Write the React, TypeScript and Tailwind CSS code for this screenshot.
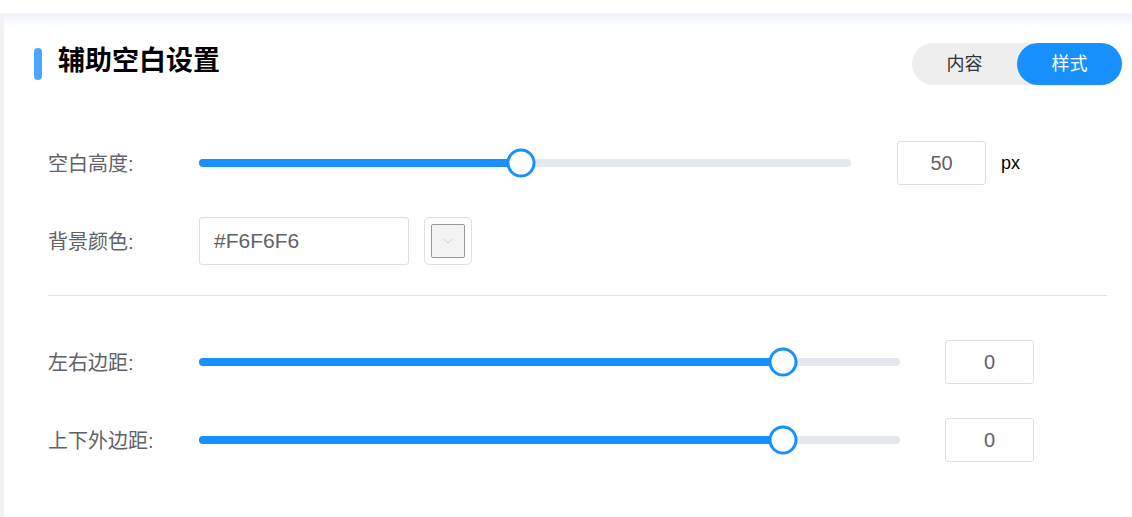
import React from "react";

const font = "font-['Liberation_Sans','Noto_Sans_CJK_SC',sans-serif]";

function Slider({ pct }: { pct: number }) {
  return (
    <div className="relative flex-1 h-[8px] rounded-full bg-[#e4e7ed]">
      <div className="absolute left-0 top-0 h-[8px] rounded-full bg-[#1890ff]" style={{ width: `${pct}%` }} />
      <div
        className="absolute top-1/2 w-[29px] h-[29px] -translate-x-1/2 -translate-y-1/2 rounded-full border-[3px] border-[#1890ff] bg-white"
        style={{ left: `${pct}%` }}
      />
    </div>
  );
}

function NumInput({ value }: { value: string }) {
  return (
    <div className="w-[89px] h-[44px] flex items-center justify-center border border-[#dcdfe6] rounded-[3px] text-[20px] text-[#606266]">
      {value}
    </div>
  );
}

function Label({ children }: { children: React.ReactNode }) {
  return <div className="w-[151px] pt-[2px] text-[20px] leading-none text-[#606266]">{children}</div>;
}

export default function App() {
  return (
    <div className={`w-[1132px] h-[517px] bg-white flex flex-col overflow-hidden ${font}`}>
      <div className="h-[13px] bg-white" />
      <div className="flex flex-1">
        <div className="w-[4px] bg-[#f2f2f2]" />
        <div className="relative flex-1 bg-white">
          <div className="absolute left-0 right-0 top-0 h-[14px] bg-gradient-to-b from-[#edf1fb] to-white" />
          <div className="relative">
            {/* header */}
            <div className="mt-[30px] h-[42px] flex items-center justify-between pl-[30px] pr-[10px]">
              <div className="flex items-center">
                <div className="w-[8px] h-[32px] rounded-full bg-[#4ca6ff]" />
                <div className="ml-[16px] mb-[6px] text-[27px] font-bold text-black leading-none">辅助空白设置</div>
              </div>
              <div className="flex w-[210px] h-[42px] rounded-full bg-[#eeeeee] text-[18px]">
                <div className="flex-1 flex items-center justify-center text-[#333]">内容</div>
                <div className="w-[105px] flex items-center justify-center rounded-full bg-[#1890ff] text-white">样式</div>
              </div>
            </div>

            <div className="pl-[44px] pr-[25px]">
              {/* row 1 */}
              <div className="mt-[56px] mr-[73px] h-[44px] flex items-center">
                <Label>空白高度:</Label>
                <Slider pct={49.4} />
                <div className="ml-[46px]"><NumInput value="50" /></div>
                <div className="w-[48px] pl-[15px] text-[18px] text-black">px</div>
              </div>
              {/* row 2 */}
              <div className="mt-[32px] h-[48px] flex items-center">
                <Label>背景颜色:</Label>
                <div className="w-[210px] h-[48px] flex items-center pl-[14px] border border-[#dcdfe6] rounded-[3px] text-[21px] text-[#606266]">
                  #F6F6F6
                </div>
                <div className="ml-[15px] w-[48px] h-[48px] flex items-center justify-center border border-[#dcdfe6] rounded-[5px]">
                  <div className="w-[34px] h-[34px] flex items-center justify-center border border-[#999] rounded-[2px] bg-[#f3f3f3]">
                    <svg width="10" height="6" viewBox="0 0 10 6" fill="none">
                      <path d="M1 1l4 4 4-4" stroke="#d0d0d0" strokeWidth="1" />
                    </svg>
                  </div>
                </div>
              </div>
              {/* divider */}
              <div className="mt-[30px] h-px bg-[#e2e2e6]" />
              {/* row 3 */}
              <div className="mt-[44px] mr-[73px] h-[44px] flex items-center">
                <Label>左右边距:</Label>
                <Slider pct={83.3} />
                <div className="ml-[45px]"><NumInput value="0" /></div>
              </div>
              {/* row 4 */}
              <div className="mt-[34px] mr-[73px] h-[44px] flex items-center">
                <Label>上下外边距:</Label>
                <Slider pct={83.3} />
                <div className="ml-[45px]"><NumInput value="0" /></div>
              </div>
            </div>
          </div>
        </div>
      </div>
    </div>
  );
}
